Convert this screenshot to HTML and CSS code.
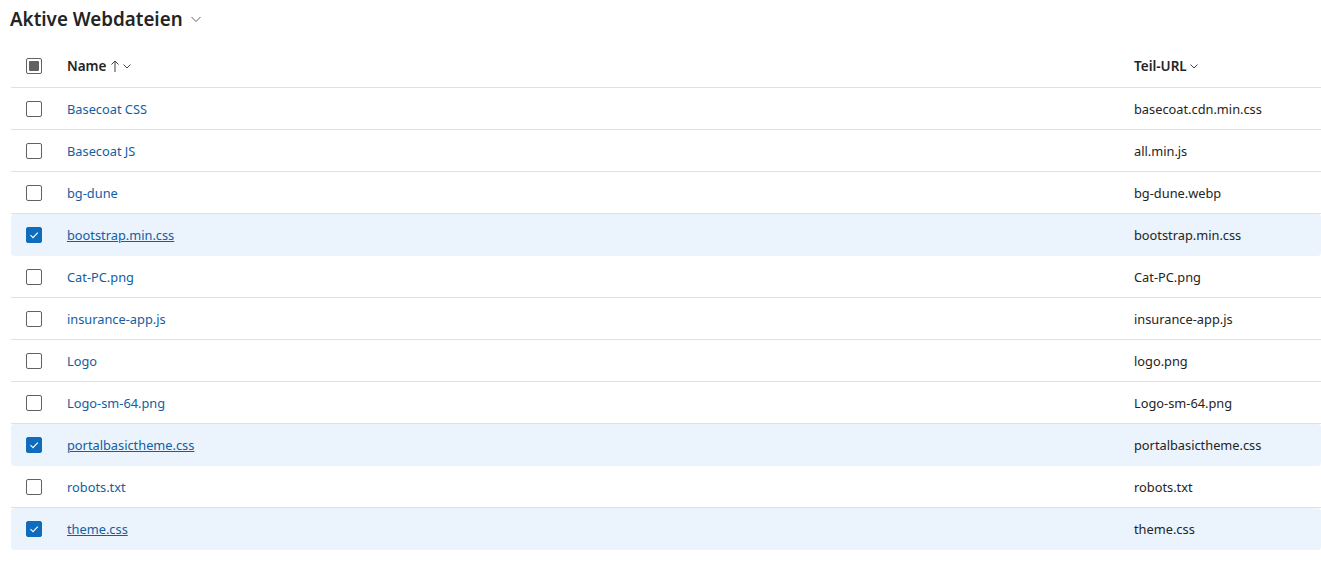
FILE: index.html
```html
<!DOCTYPE html>
<html lang="de">
<head>
<meta charset="utf-8">
<link rel="stylesheet" href="styles.css">
</head>
<body>
<div class="page">
  <div class="title">
    <h1>Aktive Webdateien</h1>
    <svg class="title-chev" width="12" height="12" viewBox="0 0 12 12"><path d="M1.5 4 L6 8.5 L10.5 4" fill="none" stroke="#616161" stroke-width="1"/></svg>
  </div>
  <div class="grid">
    <div class="row head">
      <div class="cell check"><span class="box mixed"><span class="inner"></span></span></div>
      <div class="cell name"><span class="hd">Name</span>
        <svg class="arrow" width="10" height="14" viewBox="0 0 10 14"><path d="M5 13 V2 M1.5 5.5 L5 2 L8.5 5.5" fill="none" stroke="#424242" stroke-width="1"/></svg>
        <svg class="chev" width="10" height="10" viewBox="0 0 10 10"><path d="M1.5 3.5 L5 7 L8.5 3.5" fill="none" stroke="#424242" stroke-width="1"/></svg>
      </div>
      <div class="cell url"><span class="hd">Teil-URL</span>
        <svg class="chev" width="10" height="10" viewBox="0 0 10 10"><path d="M1.5 3.5 L5 7 L8.5 3.5" fill="none" stroke="#424242" stroke-width="1"/></svg>
      </div>
    </div>
    <div class="row"><div class="cell check"><span class="box"></span></div><div class="cell name"><a>Basecoat CSS</a></div><div class="cell url">basecoat.cdn.min.css</div></div>
    <div class="row"><div class="cell check"><span class="box"></span></div><div class="cell name"><a>Basecoat JS</a></div><div class="cell url">all.min.js</div></div>
    <div class="row"><div class="cell check"><span class="box"></span></div><div class="cell name"><a>bg-dune</a></div><div class="cell url">bg-dune.webp</div></div>
    <div class="row sel"><div class="cell check"><span class="box on"><svg width="12" height="12" viewBox="0 0 12 12"><path d="M2.5 6.2 L5 8.6 L9.8 3.6" fill="none" stroke="#fff" stroke-width="1.1"/></svg></span></div><div class="cell name"><a>bootstrap.min.css</a></div><div class="cell url">bootstrap.min.css</div></div>
    <div class="row"><div class="cell check"><span class="box"></span></div><div class="cell name"><a>Cat-PC.png</a></div><div class="cell url">Cat-PC.png</div></div>
    <div class="row"><div class="cell check"><span class="box"></span></div><div class="cell name"><a>insurance-app.js</a></div><div class="cell url">insurance-app.js</div></div>
    <div class="row"><div class="cell check"><span class="box"></span></div><div class="cell name"><a>Logo</a></div><div class="cell url">logo.png</div></div>
    <div class="row"><div class="cell check"><span class="box"></span></div><div class="cell name"><a>Logo-sm-64.png</a></div><div class="cell url">Logo-sm-64.png</div></div>
    <div class="row sel"><div class="cell check"><span class="box on"><svg width="12" height="12" viewBox="0 0 12 12"><path d="M2.5 6.2 L5 8.6 L9.8 3.6" fill="none" stroke="#fff" stroke-width="1.1"/></svg></span></div><div class="cell name"><a>portalbasictheme.css</a></div><div class="cell url">portalbasictheme.css</div></div>
    <div class="row"><div class="cell check"><span class="box"></span></div><div class="cell name"><a>robots.txt</a></div><div class="cell url">robots.txt</div></div>
    <div class="row sel"><div class="cell check"><span class="box on"><svg width="12" height="12" viewBox="0 0 12 12"><path d="M2.5 6.2 L5 8.6 L9.8 3.6" fill="none" stroke="#fff" stroke-width="1.1"/></svg></span></div><div class="cell name"><a>theme.css</a></div><div class="cell url">theme.css</div></div>
  </div>
</div>
</body>
</html>
```
FILE: styles.css
```css
html, body {
  margin: 0;
  padding: 0;
  background: #ffffff;
}
body {
  font-family: "Noto Sans", "Open Sans", sans-serif;
  font-size: 12.8px;
  color: #242424;
}
.page {
  padding: 0 0 0 11px;
}
.title {
  display: flex;
  align-items: center;
  height: 37px;
  margin-left: -1px;
  gap: 7px;
}
.title h1 {
  margin: 0;
  font-size: 18.8px;
  font-weight: 600;
  color: #242424;
  line-height: 26px;
}
.title-chev {
  margin-top: 1px;
}
.grid {
  margin-top: 9px;
}
.row {
  display: flex;
  align-items: center;
  height: 41px;
  border-bottom: 1px solid #e0e0e0;
}
.row.head {
  padding-bottom: 1px;
  height: 40px;
}
.row.sel {
  background: #ebf3fc;
  border-radius: 4px;
  border-bottom-color: #ebf3fc;
}
.cell {
  display: flex;
  align-items: center;
}
.check {
  width: 56px;
  padding-left: 15px;
  box-sizing: border-box;
}
.name {
  flex: 1;
}
.url {
  width: 187px;
}
.hd {
  font-weight: 600;
  font-size: 13.5px;
}
.arrow {
  margin-left: 4px;
}
.chev {
  margin-left: 2px;
}
.box {
  width: 16px;
  height: 16px;
  box-sizing: border-box;
  border: 1px solid #616161;
  border-radius: 2px;
  display: flex;
  align-items: center;
  justify-content: center;
  background: #fff;
}
.box.on {
  background: #0f6cbd;
  border-color: #0f6cbd;
}
.box .inner {
  width: 10px;
  height: 10px;
  background: #616161;
  border-radius: 1px;
}
a {
  color: #115ea3;
  text-decoration: none;
}
.row.sel a {
  text-decoration: underline;
}
```
